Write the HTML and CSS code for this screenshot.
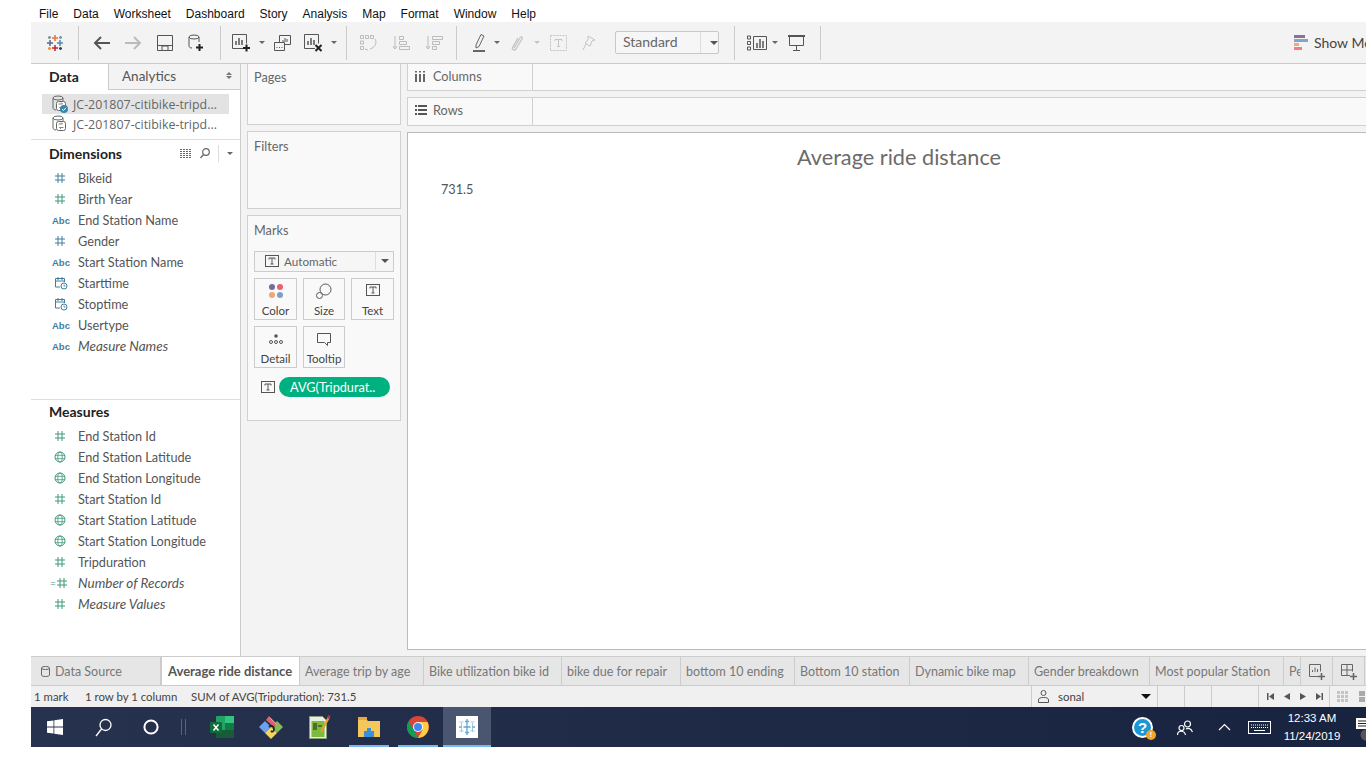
FILE: index.html
```html
<!DOCTYPE html>
<html lang="en">
<head>
    <meta charset="UTF-8">
    <title>Tableau - Average ride distance</title>
    <link rel="stylesheet" href="styles.css">
</head>

<body>
    <svg class="sprites" width="0" height="0">
        <symbol id="hash" viewBox="0 0 12 12"><path d="M4 1v10M8 1v10M1 4h10M1 8h10" fill="none" stroke="currentColor"/></symbol>
        <symbol id="cal" viewBox="0 0 14 14"><path d="M1.500 11V2.500h9V6M1.500 5h9M4 1v3M8 1v3M1.500 11H6" fill="none" stroke="currentColor"/><circle cx="10" cy="10" r="3" fill="none" stroke="currentColor"/><path d="M10 8.500V10h1.500" fill="none" stroke="currentColor" stroke-width=".8"/></symbol>
        <symbol id="globe" viewBox="0 0 12 12"><circle cx="6" cy="6" r="5" fill="none" stroke="currentColor"/><ellipse cx="6" cy="6" rx="2.200" ry="5" fill="none" stroke="currentColor" stroke-width=".8"/><path d="M1 4.300h10M1 7.700h10" fill="none" stroke="currentColor" stroke-width=".8"/></symbol>
        <symbol id="tbox" viewBox="0 0 14 14"><rect x=".5" y="1.500" width="13" height="11" fill="none" stroke="currentColor"/><path d="M4 5.500V4h6v1.500M7 4v6M5.500 10h3" fill="none" stroke="currentColor"/></symbol>
        <symbol id="datasrc" viewBox="0 0 16 18"><ellipse cx="7" cy="3" rx="5" ry="2" fill="none" stroke="currentColor"/><path d="M2 3v10c0 1 1.500 2 3 2M12 3v3" fill="none" stroke="currentColor"/><rect x="5.500" y="6.500" width="9" height="9" rx="2" fill="#fff" stroke="currentColor"/><path d="M7.500 9h4l-1.500-1.500M12.500 12.500h-4l1.500 1.500" fill="none" stroke="currentColor" stroke-width=".8"/></symbol>
    </svg>

    <div class="app">
        <nav class="menu">
            <span>File</span><span>Data</span><span>Worksheet</span><span>Dashboard</span><span>Story</span><span>Analysis</span><span>Map</span><span>Format</span><span>Window</span><span>Help</span>
        </nav>

        <div class="toolbar">
            <div class="tool-group logo-group">
                <svg width="18" height="18" viewBox="0 0 18 18" fill="none" stroke-width="1.500">
                    <path d="M9 1v6M6 4h6" stroke="#e8762d"/>
                    <path d="M9 11v6M6 14h6" stroke="#c72035"/>
                    <path d="M4 6v6M1 9h6" stroke="#5b6591"/>
                    <path d="M14 6v6M11 9h6" stroke="#59879b"/>
                    <path d="M3.500 2v3M2 3.500h3M14.500 2v3M13 3.500h3" stroke="#7099a6"/>
                    <path d="M3.500 13v3M2 14.500h3" stroke="#eb912b"/>
                    <path d="M14.500 13v3M13 14.500h3" stroke="#1f457e"/>
                </svg>
            </div>
            <div class="tool-group history-group">
                <svg width="17" height="16" viewBox="0 0 17 16" fill="none" stroke="#555" stroke-width="2"><path d="M17 8H2M8 2L2 8l6 6"/></svg>
                <svg width="17" height="16" viewBox="0 0 17 16" fill="none" stroke="#bbb" stroke-width="2"><path d="M0 8h15M9 2l6 6-6 6"/></svg>
                <svg width="16" height="16" viewBox="0 0 16 16" fill="none" stroke="#555"><path d="M.5.500h15v15H.5zM.5 10.500h15M5 15v-4h6v4"/></svg>
                <svg width="16" height="18" viewBox="0 0 16 18" fill="none" stroke="#555"><ellipse cx="6" cy="3" rx="5" ry="2"/><path d="M1 3v9c0 1 1 2 3 2M11 3v5"/><path d="M8 13.500h7M11.500 10v7" stroke="#222" stroke-width="2"/></svg>
            </div>
            <div class="tool-group sheet-group">
                <svg width="19" height="18" viewBox="0 0 19 18" fill="none" stroke="#555"><path d="M12 14.500H.5V.5h14v9"/><path d="M4 11V7M7 11V4M10 11V6" stroke-width="1.500"/><path d="M11 14h7M14.500 10.500v7" stroke="#222" stroke-width="2"/></svg>
                <i class="caret"></i>
                <svg class="dup" width="17" height="16" viewBox="0 0 17 16" fill="none" stroke="#555"><path d="M5.500 7V.5h11v9H11"/><path d="M9 7V5M11 7V3M13 7V4"/><path d="M.5 7.500h10v8H.5zM3 13v-1M5.500 13v-1M8 13v-1"/></svg>
                <svg class="clear" width="19" height="18" viewBox="0 0 19 18" fill="none" stroke="#555"><path d="M11 14.500H.5V.5h14v9"/><path d="M4 11V7M7 11V4M10 11V6" stroke-width="1.500"/><path d="M11.500 11l6 6M17.500 11l-6 6" stroke="#222" stroke-width="2"/></svg>
                <i class="caret"></i>
            </div>
            <div class="tool-group sort-group">
                <svg width="17" height="18" viewBox="0 0 17 18" fill="none" stroke="#bbb"><path d="M.5 1.500h3v3h-3zM5.500 1.500h3v3h-3zM10.500 1.500h3v3h-3zM.5 7h3v3h-3zM.5 12.500h3v3h-3zM15 5c2 3 1 8-5 10M5 15l3 1"/></svg>
                <svg width="18" height="16" viewBox="0 0 18 16" fill="none" stroke="#bbb"><path d="M3 1v13M1 11l2 3 2-3"/><path d="M7.500 1.500h4v3h-4zM7.500 6.500h7v3h-7zM7.500 11.500h10v3h-10z"/></svg>
                <svg width="18" height="16" viewBox="0 0 18 16" fill="none" stroke="#bbb"><path d="M3 1v13M1 11l2 3 2-3"/><path d="M7.500 1.500h10v3h-10zM7.500 6.500h7v3h-7zM7.500 11.500h4v3h-4z"/></svg>
            </div>
            <div class="tool-group mark-group">
                <svg width="13" height="19" viewBox="0 0 13 19" fill="none" stroke="#666"><path d="M3 12L8 1.500l3 1.500-5 10.500-3 1.500z"/><path d="M0 18h12" stroke-width="2"/></svg>
                <i class="caret"></i>
                <svg class="clip" width="13" height="16" viewBox="0 0 13 16" fill="none" stroke="#c4c4c4" stroke-width="1.300"><path d="M4 13L10 3c1-2 3-1 2 1L6 14c-1.500 2-4.500.5-3.500-1.500L8 3"/></svg>
                <i class="caret off"></i>
                <svg class="label-box" width="17" height="16" viewBox="0 0 17 16" fill="none" stroke="#c4c4c4"><path d="M.5.500h16v15H.5z" stroke-dasharray="2 1"/><path d="M5 6V4.500h7V6M8.500 4.500v7M7 11.500h3"/></svg>
                <svg class="pin" width="14" height="16" viewBox="0 0 14 16" fill="none" stroke="#c4c4c4"><path d="M6 1l7 4-3 1-2 5-2-1-3-2 3-3zM4 9l-3 6"/></svg>
                <div class="fit-select"><span>Standard</span><b><i class="caret dark"></i></b></div>
            </div>
            <div class="tool-group show-group">
                <svg width="20" height="16" viewBox="0 0 20 16" fill="none" stroke="#555"><path d="M.5 1h3v3h-3zM.5 6.500h3v3h-3zM.5 12h3v3h-3zM6.500 1.500h13v13h-13z"/><path d="M10 13V8M13 13V4M16 13V6" stroke-width="1.500"/></svg>
                <i class="caret"></i>
                <svg class="present" width="17" height="16" viewBox="0 0 17 16" fill="none" stroke="#555"><path d="M0 1h17" stroke-width="2"/><path d="M1.500 1v9.500h14V1M8.500 10.500V15M5 15.500h7"/></svg>
            </div>
            <div class="show-me">
                <svg width="14" height="15" viewBox="0 0 14 15"><rect width="11" height="3" fill="#8a7196"/><rect y="4" width="14" height="3" fill="#86a4c9"/><rect y="8" width="5" height="3" fill="#f3a878"/><rect y="12" width="8" height="3" fill="#f57c87"/></svg>
                <span>Show Me</span>
            </div>
        </div>

        <div class="workspace">
            <aside class="data-panel">
                <div class="panel-tabs">
                    <div class="panel-tab active">Data</div>
                    <div class="panel-tab">Analytics<span class="updown"></span></div>
                </div>
                <div class="sources">
                    <div class="source selected">
                        <span class="src-icon"><svg width="16" height="18"><use href="#datasrc"/></svg><svg class="check" width="8" height="8" viewBox="0 0 8 8"><circle cx="4" cy="4" r="4" fill="#3b87ac"/><path d="M2 4l1.500 1.500L6 2.800" fill="none" stroke="#fff"/></svg></span>
                        JC-201807-citibike-tripd...
                    </div>
                    <div class="source">
                        <span class="src-icon"><svg width="16" height="18"><use href="#datasrc"/></svg></span>
                        JC-201807-citibike-tripd...
                    </div>
                </div>

                <section class="fields dims">
                    <header class="fields-head">
                        <h3>Dimensions</h3>
                        <svg class="grid-ico" width="12" height="9" viewBox="0 0 12 9" fill="none" stroke="#666" stroke-dasharray="2 1"><path d="M0 .5h12M0 2.500h12M0 4.500h12M0 6.500h12M0 8.500h12"/></svg>
                        <svg class="search-ico" width="10" height="11" viewBox="0 0 10 11" fill="none" stroke="#666" stroke-width="1.200"><circle cx="6" cy="4" r="3.300"/><path d="M3.500 6.500L.5 10"/></svg>
                        <i class="head-sep"></i>
                        <i class="caret"></i>
                    </header>
                    <ul>
                        <li><span class="ftype dim"><svg width="12" height="12"><use href="#hash"/></svg></span>Bikeid</li>
                        <li><span class="ftype mea"><svg width="12" height="12"><use href="#hash"/></svg></span>Birth Year</li>
                        <li><span class="ftype dim abc">Abc</span>End Station Name</li>
                        <li><span class="ftype dim"><svg width="12" height="12"><use href="#hash"/></svg></span>Gender</li>
                        <li><span class="ftype dim abc">Abc</span>Start Station Name</li>
                        <li><span class="ftype dim"><svg width="14" height="14"><use href="#cal"/></svg></span>Starttime</li>
                        <li><span class="ftype dim"><svg width="14" height="14"><use href="#cal"/></svg></span>Stoptime</li>
                        <li><span class="ftype dim abc">Abc</span>Usertype</li>
                        <li class="calc"><span class="ftype dim abc">Abc</span>Measure Names</li>
                    </ul>
                </section>

                <section class="fields meas">
                    <header class="fields-head">
                        <h3>Measures</h3>
                    </header>
                    <ul>
                        <li><span class="ftype mea"><svg width="12" height="12"><use href="#hash"/></svg></span>End Station Id</li>
                        <li><span class="ftype mea"><svg width="12" height="12"><use href="#globe"/></svg></span>End Station Latitude</li>
                        <li><span class="ftype mea"><svg width="12" height="12"><use href="#globe"/></svg></span>End Station Longitude</li>
                        <li><span class="ftype mea"><svg width="12" height="12"><use href="#hash"/></svg></span>Start Station Id</li>
                        <li><span class="ftype mea"><svg width="12" height="12"><use href="#globe"/></svg></span>Start Station Latitude</li>
                        <li><span class="ftype mea"><svg width="12" height="12"><use href="#globe"/></svg></span>Start Station Longitude</li>
                        <li><span class="ftype mea"><svg width="12" height="12"><use href="#hash"/></svg></span>Tripduration</li>
                        <li class="calc"><span class="ftype mea eq">=<svg width="12" height="12"><use href="#hash"/></svg></span>Number of Records</li>
                        <li class="calc"><span class="ftype mea"><svg width="12" height="12"><use href="#hash"/></svg></span>Measure Values</li>
                    </ul>
                </section>
            </aside>

            <div class="cards">
                <div class="card pages">Pages</div>
                <div class="card filters">Filters</div>
                <div class="card marks">
                    <div>Marks</div>
                    <div class="mark-type">
                        <svg width="14" height="14" class="mt-ico"><use href="#tbox"/></svg>
                        <span>Automatic</span>
                        <b><i class="caret dark"></i></b>
                    </div>
                    <div class="mark-btns">
                        <div class="mark-btn">
                            <svg width="16" height="16" viewBox="0 0 16 16"><circle cx="4" cy="4" r="3" fill="#7a6a96"/><circle cx="12" cy="4" r="3" fill="#e8616e"/><circle cx="4" cy="12" r="3" fill="#f2a575"/><circle cx="12" cy="12" r="3" fill="#7f9fc6"/></svg>
                            Color
                        </div>
                        <div class="mark-btn">
                            <svg width="16" height="16" viewBox="0 0 16 16" fill="none" stroke="#555"><circle cx="9.500" cy="6.500" r="5.500"/><circle cx="3.500" cy="12.500" r="3" fill="#f9f9f9"/></svg>
                            Size
                        </div>
                        <div class="mark-btn">
                            <svg width="14" height="14"><use href="#tbox"/></svg>
                            Text
                        </div>
                        <div class="mark-btn">
                            <svg width="16" height="16" viewBox="0 0 16 16" fill="none" stroke="#555"><circle cx="8" cy="5" r="1.800" fill="#555" stroke="none"/><circle cx="3" cy="11" r="1.500"/><circle cx="8" cy="11" r="1.500"/><circle cx="13" cy="11" r="1.500"/></svg>
                            Detail
                        </div>
                        <div class="mark-btn">
                            <svg width="16" height="16" viewBox="0 0 16 16" fill="none" stroke="#555"><path d="M1.500 2.500h13v9h-3v3l-3-3h-7z"/></svg>
                            Tooltip
                        </div>
                    </div>
                    <div class="pill-row">
                        <svg width="14" height="14"><use href="#tbox"/></svg>
                        <span class="pill">AVG(Tripdurat..</span>
                    </div>
                </div>
            </div>

            <div class="view-col">
                <div class="shelf">
                    <div class="shelf-label"><svg width="18" height="11" viewBox="0 0 18 11" fill="#666"><path d="M0 3h2v8H0zM4 3h2v8H4zM8 3h2v8H8zM0 0h2v1.500H0zM4 0h2v1.500H4zM8 0h2v1.500H8z"/></svg>Columns</div>
                </div>
                <div class="shelf">
                    <div class="shelf-label"><svg width="18" height="10" viewBox="0 0 18 10" fill="#555"><path d="M0 0h2v2H0zM3 0h9v2H3zM0 4h2v2H0zM3 4h9v2H3zM0 8h2v2H0zM3 8h9v2H3z"/></svg>Rows</div>
                </div>
                <main class="view">
                    <h1>Average ride distance</h1>
                    <p>731.5</p>
                </main>
            </div>
        </div>

        <div class="tabs">
            <div class="tab source-tab"><svg width="9" height="11" viewBox="0 0 9 11" fill="none" stroke="#666"><path d="M.5 2v7c0 2 8 2 8 0V2c0-2-8-2-8 0zM.5 2c0 2 8 2 8 0"/></svg>Data Source</div>
            <div class="tab current">Average ride distance</div>
            <div class="tab">Average trip by age</div>
            <div class="tab">Bike utilization bike id</div>
            <div class="tab">bike due for repair</div>
            <div class="tab">bottom 10 ending</div>
            <div class="tab">Bottom 10 station</div>
            <div class="tab">Dynamic bike map</div>
            <div class="tab">Gender breakdown</div>
            <div class="tab">Most popular Station</div>
            <div class="tab clipped">Pe</div>
            <div class="tab icon-tab"><svg width="16" height="16" viewBox="0 0 16 16" fill="none" stroke="#666"><path d="M9 12.500H.5V.5h11v7"/><path d="M3.500 8V6M6 8V3.500M8.500 8V5"/><path d="M9 12.500h7M12.500 9v7" stroke-width="1.600"/></svg></div>
            <div class="tab icon-tab"><svg width="16" height="16" viewBox="0 0 16 16" fill="none" stroke="#666"><path d="M9 11.500H.5V.5h11v7M.5 6h11M6 .5v11"/><path d="M9 12.500h7M12.500 9v7" stroke-width="1.600"/></svg></div>
        </div>

        <div class="status">
            <span class="st-mark">1 mark</span>
            <span class="st-size">1 row by 1 column</span>
            <span class="st-sum">SUM of AVG(Tripduration): 731.5</span>
            <div class="st-user">
                <svg width="11" height="13" viewBox="0 0 11 13" fill="none" stroke="#555"><circle cx="5.500" cy="3" r="2.500"/><path d="M.5 12.500V10c0-2 2-2.500 5-2.500s5 .5 5 2.500v2.500z"/></svg>
                <span>sonal</span>
                <i class="caret black"></i>
            </div>
            <i class="st-cell"></i>
            <i class="st-cell"></i>
            <i class="st-gap"></i>
            <div class="st-nav">
                <svg width="7" height="7" viewBox="0 0 7 7" fill="#555"><path d="M0 0h1.500v7H0zM7 0v7L2 3.500z"/></svg>
                <svg width="6" height="7" viewBox="0 0 6 7" fill="#555"><path d="M6 0v7L0 3.500z"/></svg>
                <svg width="6" height="7" viewBox="0 0 6 7" fill="#555"><path d="M0 0v7l6-3.500z"/></svg>
                <svg width="7" height="7" viewBox="0 0 7 7" fill="#555"><path d="M7 0H5.500v7H7zM0 0v7l5-3.500z"/></svg>
            </div>
            <div class="st-views">
                <svg width="11" height="11" viewBox="0 0 11 11" fill="#c4c4c4"><path d="M0 0h3v3H0zM4 0h3v3H4zM8 0h3v3H8zM0 4h3v3H0zM4 4h3v3H4zM8 4h3v3H8zM0 8h3v3H0zM4 8h3v3H4zM8 8h3v3H8z"/></svg>
                <svg width="6" height="11" viewBox="0 0 6 11" fill="#aaa"><path d="M0 0h6v5H0zM0 6h6v5H0z"/></svg>
            </div>
        </div>

        <footer class="taskbar">
            <div class="task-icon"><svg width="16" height="16" viewBox="0 0 16 16" fill="#fff"><path d="M0 2.300L6.500 1.400v6.200H0zM7.300 1.300L16 0v7.600H7.300zM0 8.400h6.500v6.200L0 13.700zM7.300 8.400H16V16l-8.700-1.300z"/></svg></div>
            <div class="task-icon"><svg width="17" height="19" viewBox="0 0 17 19" fill="none" stroke="#fff" stroke-width="1.300"><circle cx="10.500" cy="7" r="5.500"/><path d="M6.500 11L1 18"/></svg></div>
            <div class="task-icon"><svg width="16" height="16" viewBox="0 0 16 16" fill="none" stroke="#fff" stroke-width="2"><circle cx="8" cy="8" r="6.600"/></svg></div>
            <div class="task-sep"></div>
            <div class="task-apps">
                <div class="task-icon"><svg width="24" height="22" viewBox="0 0 24 22"><rect x="6" width="18" height="22" rx="1" fill="#21a366"/><rect x="15" width="9" height="7" fill="#33c481"/><rect x="15" y="7" width="9" height="7" fill="#107c41"/><rect x="6" y="14" width="18" height="8" fill="#185c37"/><rect y="6" width="12" height="11" rx="1" fill="#0f6d3b"/><path d="M3.500 8.500l5 6M8.500 8.500l-5 6" stroke="#fff" stroke-width="1.500"/></svg></div>
                <div class="task-icon"><svg width="24" height="24" viewBox="0 0 24 24"><path d="M0 12l6-6 6 6-6 6z" fill="#6aa2f2"/><path d="M12 12l6-6 6 6-6 6z" fill="#7fbe54"/><path d="M6 18l6-6 6 6-6 6z" fill="#f4d55f"/><path d="M7 5l3-4 8 8-3 3z" fill="#e85d68"/><path d="M11 3l7 7" stroke="#e9a0a6"/><path d="M10 12c2-2 5-1 5 2s-2 3-3 2" fill="none" stroke="#222" stroke-width="1.800"/></svg></div>
                <div class="task-icon"><svg width="22" height="24" viewBox="0 0 22 24"><path d="M.5 1.500h13l4 4v18H.5z" fill="#e8efe0" stroke="#8c9c84"/><rect x="2.500" y="6" width="13" height="16" fill="#7dbb3a"/><path d="M5 8v7M7 8v7M9 11h4" stroke="#222"/><path d="M12 17L20 2" stroke="#e0a030" stroke-width="2.400"/><path d="M19 3.500L20.500 .5" stroke="#b3373f" stroke-width="2.400"/></svg></div>
                <div class="task-icon open"><svg width="22" height="20" viewBox="0 0 22 20"><path d="M0 2h8l2 2h12v16H0z" fill="#f5c75a"/><rect width="9" height="3" fill="#e9a93a"/><path d="M6 20v-6h3v-3h4v3h3v6z" fill="#3a8fd9"/></svg></div>
                <div class="task-icon open"><svg width="22" height="22" viewBox="0 0 22 22"><circle cx="11" cy="11" r="11" fill="#db4437"/><path d="M11 22A11 11 0 0 1 1.500 5.500L7 14z" fill="#0f9d58"/><path d="M11 6h9.500A11 11 0 0 1 11 22l4.500-8z" fill="#ffcd40"/><circle cx="11" cy="11" r="5" fill="#fff"/><circle cx="11" cy="11" r="4" fill="#4285f4"/></svg></div>
                <div class="task-icon active"><svg width="22" height="22" viewBox="0 0 22 22" fill="none"><rect width="22" height="22" fill="#fff"/><path d="M11 3v16M7.500 11h7M3 11h3M16 11h3M9 5.500h4M9 16.500h4" stroke="#5fa8d3" stroke-width="1.300"/><path d="M5.500 7v4M5.500 12v4M16.500 7v3M16.500 12v4M3.500 6h4M14.500 6h4M3.500 15h4M14.500 15h4" stroke="#9cc9e3"/></svg></div>
            </div>
            <div class="tray">
                <div class="help-ico">?<i>!</i></div>
                <svg class="people" width="16" height="15" viewBox="0 0 16 15" fill="none" stroke="#fff" stroke-width="1.200"><circle cx="10.500" cy="4" r="3"/><circle cx="4.500" cy="8" r="2.500"/><path d="M.5 15c0-5 7-5 8 0M9 9c2-1 5-1 6.500 3"/></svg>
                <svg class="chev" width="13" height="8" viewBox="0 0 13 8" fill="none" stroke="#fff" stroke-width="1.200"><path d="M1 7l5.500-5.500L12 7"/></svg>
                <svg class="kbd" width="23" height="13" viewBox="0 0 23 13" fill="none" stroke="#fff"><rect x=".5" y=".5" width="22" height="12"/><path d="M3 4h17M3 6.500h17" stroke-dasharray="1 1"/><path d="M6 9.500h11"/></svg>
                <div class="clock"><span>12:33 AM</span><span>11/24/2019</span></div>
                <svg class="note" width="10" height="23" viewBox="0 0 10 23"><circle cx="10" cy="17" r="5.500" fill="#555"/><path d="M0 0h10v11H0z" fill="#fff"/><path d="M2 3h8M2 5.500h8M2 8h8" stroke="#222"/></svg>
            </div>
        </footer>
    </div>
</body>
</html>
```

FILE: styles.css
```css
* {
    margin: 0;
    padding: 0;
    box-sizing: border-box;
}

html, body {
    width: 1366px;
    height: 768px;
    overflow: hidden;
    background: #fff;
}

body {
    font-family: "Lato", "Open Sans", sans-serif;
    font-size: 12.7px;
    color: #555;
}

.sprites {
    display: block;
    height: 0;
}

.app {
    margin-left: 31px;
    height: 747px;
    display: flex;
    flex-direction: column;
    overflow: hidden;
}

.caret {
    display: inline-block;
    width: 0;
    height: 0;
    border-left: 3px solid transparent;
    border-right: 3px solid transparent;
    border-top: 3px solid #666;
}

.caret.off {
    border-top-color: #c4c4c4;
}

.caret.dark {
    border-left-width: 4px;
    border-right-width: 4px;
    border-top: 4px solid #555;
}

.caret.black {
    border-left-width: 5px;
    border-right-width: 5px;
    border-top: 5px solid #111;
}

/* menu */
.menu {
    height: 22px;
    flex: none;
    padding: 5px 0 0 8px;
    display: flex;
    align-items: center;
    gap: 15px;
    font-family: "Liberation Sans", sans-serif;
    font-size: 12px;
    color: #111;
    background: #fff;
}

/* toolbar */
.toolbar {
    height: 42px;
    flex: none;
    display: flex;
    align-items: stretch;
    padding: 4px 0 3px;
    background: #f3f3f3;
    border-bottom: 1px solid #ccc;
}

.tool-group {
    display: flex;
    align-items: center;
    flex: none;
    padding-bottom: 1px;
    border-right: 1px solid #ccc;
}

.logo-group {
    width: 48px;
    padding-left: 15px;
}

.history-group {
    width: 142px;
    padding-left: 14px;
    gap: 15px;
}

.sheet-group {
    width: 126px;
    padding-left: 11px;
}

.sheet-group .caret {
    margin-left: 8px;
}

.sheet-group .dup {
    margin-left: 9px;
}

.sheet-group .clear {
    margin-left: 13px;
}

.sort-group {
    width: 110px;
    padding-left: 13px;
    gap: 15px;
}

.mark-group {
    width: 278px;
    padding-left: 16px;
}

.mark-group .caret {
    margin-left: 8px;
}

.mark-group .clip {
    margin-left: 10px;
}

.mark-group .caret.off {
    margin-left: 11px;
}

.mark-group .label-box {
    margin-left: 10px;
}

.mark-group .pin {
    margin-left: 15px;
}

.fit-select {
    width: 104px;
    height: 23px;
    margin-left: 19px;
    display: flex;
    align-items: center;
    background: #f6f6f6;
    border: 1px solid #c8c8c8;
    border-radius: 2px;
    font-size: 14px;
    color: #666;
}

.fit-select span {
    flex: 1;
    padding: 0 0 2px 7px;
}

.fit-select b {
    width: 18px;
    height: 100%;
    display: flex;
    align-items: center;
    justify-content: center;
    border-left: 1px solid #ddd;
}

.show-group {
    width: 86px;
    padding-left: 12px;
}

.show-group .caret {
    margin-left: 5px;
}

.show-group .present {
    margin-left: 10px;
}

.show-me {
    margin-left: auto;
    width: 72px;
    flex: none;
    display: flex;
    align-items: center;
    gap: 6px;
    padding-bottom: 2px;
    font-size: 14px;
    color: #444;
    white-space: nowrap;
    overflow: hidden;
}

.show-me svg {
    flex: none;
}

/* main area */
.workspace {
    flex: 1;
    min-height: 0;
    display: flex;
    background: #f3f3f3;
}

/* data pane */
.data-panel {
    width: 210px;
    flex: none;
    background: #fff;
    border-right: 1px solid #ccc;
}

.panel-tabs {
    display: flex;
    height: 26px;
}

.panel-tab {
    display: flex;
    align-items: center;
    padding-bottom: 1px;
    font-size: 13.5px;
    color: #555;
}

.panel-tab.active {
    width: 77px;
    padding-left: 18px;
    font-size: 14px;
    font-weight: 700;
    color: #222;
}

.panel-tab:not(.active) {
    flex: 1;
    padding-left: 13px;
    background: #f3f3f3;
    border-left: 1px solid #ccc;
    border-bottom: 1px solid #ccc;
    position: relative;
}

.updown {
    position: absolute;
    right: 8px;
    top: 8px;
    width: 0;
    height: 0;
    border-left: 3px solid transparent;
    border-right: 3px solid transparent;
    border-bottom: 3px solid #777;
}

.updown::after {
    content: "";
    position: absolute;
    left: -3px;
    top: 4px;
    border-left: 3px solid transparent;
    border-right: 3px solid transparent;
    border-top: 3px solid #777;
}

.sources {
    padding: 4px 11px 0;
    height: 50px;
    border-bottom: 1px solid #ddd;
}

.source {
    height: 20px;
    display: flex;
    align-items: center;
    font-family: "Open Sans", sans-serif;
    font-size: 12.4px;
    color: #666;
    white-space: nowrap;
}

.source.selected {
    background: #e3e3e3;
}

.src-icon {
    position: relative;
    width: 31px;
    flex: none;
    padding-left: 9px;
    display: flex;
    color: #666;
}

.check {
    position: absolute;
    left: 18px;
    top: 10px;
}

.fields-head {
    height: 27px;
    display: flex;
    align-items: center;
    padding-left: 18px;
}

.fields-head h3 {
    font-size: 14px;
    font-weight: 700;
    color: #222;
    flex: 1;
}

.grid-ico {
    margin-right: 8px;
}

.search-ico {
    margin-right: 8px;
}

.head-sep {
    width: 1px;
    height: 17px;
    background: #ddd;
    margin-right: 8px;
}

.fields-head .caret {
    margin-right: 7px;
}

.fields ul {
    list-style: none;
}

.fields li {
    height: 21px;
    display: flex;
    align-items: center;
    color: #555;
    white-space: nowrap;
}

.fields li.calc {
    font-size: 13.5px;
    font-style: italic;
}

.ftype {
    width: 47px;
    flex: none;
    padding-left: 23px;
    display: flex;
    align-items: center;
    font-style: normal;
}

.ftype.dim {
    color: #3f7f9e;
}

.ftype.mea {
    color: #3d9a77;
}

.ftype.abc {
    padding: 2px 0 0 21px;
    font-size: 9.5px;
    font-weight: 700;
    font-family: "Liberation Sans", sans-serif;
}

.ftype.eq {
    padding-left: 19px;
    font-size: 10px;
}

.dims {
    height: 260px;
    border-bottom: 1px solid #ddd;
}

.meas .fields-head {
    height: 24px;
    padding-bottom: 2px;
}

.meas ul {
    margin-top: 1px;
}

/* shelves and cards */
.cards {
    width: 154px;
    flex: none;
    margin-left: 6px;
}

.card {
    background: #f9f9f9;
    border: 1px solid #d0d0d0;
    padding: 5px 6px;
    color: #666;
    margin-bottom: 6px;
}

.pages {
    height: 61px;
    border-top: none;
}

.filters {
    height: 78px;
    padding-top: 6px;
}

.marks {
    height: 206px;
    padding-top: 6px;
}

.mark-type {
    height: 21px;
    margin-top: 13px;
    display: flex;
    align-items: center;
    padding-bottom: 1px;
    border: 1px solid #ccc;
    background: #f6f6f6;
    font-size: 11.7px;
}

.mt-ico {
    margin: 0 5px 0 10px;
    color: #555;
}

.mark-type span {
    flex: 1;
}

.mark-type b {
    width: 18px;
    height: 100%;
    display: flex;
    align-items: center;
    justify-content: center;
    border-left: 1px solid #ddd;
}

.mark-btns {
    display: grid;
    grid-template-columns: 43px 42px 43px;
    gap: 6px;
    margin-top: 6px;
}

.mark-btn {
    height: 42px;
    padding: 4px 0 2px;
    display: flex;
    flex-direction: column;
    align-items: center;
    justify-content: space-between;
    border: 1px solid #ccc;
    font-size: 11.5px;
    color: #444;
}

.mark-btn svg {
    color: #555;
}

.pill-row {
    margin-top: 9px;
    display: flex;
    align-items: center;
    color: #555;
}

.pill-row svg {
    margin-left: 7px;
}

.pill {
    margin-left: 4px;
    width: 111px;
    height: 20px;
    border-radius: 10px;
    background: #00b180;
    color: #fff;
    line-height: 20px;
    padding-left: 11px;
    white-space: nowrap;
    overflow: hidden;
}

.view-col {
    flex: 1;
    min-width: 0;
    margin-left: 6px;
}

.shelf {
    height: 27px;
    margin-bottom: 6px;
    background: #f9f9f9;
    border-bottom: 1px solid #d0d0d0;
    border-left: 1px solid #d0d0d0;
}

.shelf + .shelf {
    height: 29px;
    border-top: 1px solid #d0d0d0;
    margin-bottom: 6px;
}

.shelf-label {
    width: 125px;
    height: 100%;
    display: flex;
    align-items: center;
    padding: 0 0 2px 7px;
    border-right: 1px solid #d0d0d0;
    color: #666;
}

.shelf + .shelf .shelf-label {
    padding-bottom: 3px;
}

.view {
    height: 518px;
    background: #fff;
    border: 1px solid #bbb;
    border-right: none;
}

.view h1 {
    width: 982px;
    text-align: center;
    margin-top: 11px;
    font-size: 21.7px;
    font-weight: 400;
    color: #6b6b6b;
}

.view p {
    margin: 11px 0 0 33px;
    color: #555;
}

/* sheet tabs */
.tabs {
    height: 30px;
    flex: none;
    display: grid;
    grid-template-columns: 130px 139px 124px 138px 119px 114px 115px 119px 121px 134px 17px 32px 32px;
    background: #e6e6e6;
    border-top: 1px solid #ccc;
    border-bottom: 1px solid #ccc;
}

.tab {
    display: flex;
    align-items: center;
    padding: 1px 0 0 5px;
    border-right: 1px solid #ccc;
    font-size: 12.5px;
    color: #777;
    white-space: nowrap;
    overflow: hidden;
}

.source-tab {
    padding-left: 10px;
    gap: 5px;
}

.tab.current {
    background: #fff;
    padding: 0 0 0 6px;
    font-size: 13px;
    font-weight: 700;
    color: #555;
    border-left: 1px solid #ccc;
}

.icon-tab {
    justify-content: center;
    padding-left: 0;
}

/* status bar */
.status {
    height: 21px;
    flex: none;
    display: flex;
    align-items: center;
    background: #f0f0f0;
    font-size: 11.4px;
    color: #444;
    white-space: nowrap;
}

.st-mark {
    width: 54px;
    padding-left: 3px;
}

.st-size {
    width: 106px;
}

.st-sum {
    width: 840px;
}

.st-user {
    width: 127px;
    height: 100%;
    display: flex;
    align-items: center;
    padding-left: 6px;
    border-left: 1px solid #ccc;
    border-right: 1px solid #ccc;
}

.st-user span {
    flex: 1;
    padding-left: 9px;
}

.st-user .caret {
    margin-right: 6px;
}

.st-cell {
    width: 27px;
    height: 100%;
    border-right: 1px solid #ccc;
}

.st-gap {
    width: 47px;
    height: 100%;
    border-right: 1px solid #ccc;
}

.st-nav {
    width: 71px;
    height: 100%;
    display: flex;
    align-items: center;
    gap: 10px;
    padding-left: 8px;
    border-right: 1px solid #ccc;
}

.st-views {
    display: flex;
    gap: 11px;
    padding-left: 7px;
    align-items: center;
}

/* windows taskbar */
.taskbar {
    height: 40px;
    flex: none;
    display: flex;
    align-items: center;
    background: linear-gradient(90deg, #27324e, #1f2a47 50%, #18233f);
}

.task-icon {
    width: 48px;
    height: 100%;
    display: flex;
    align-items: center;
    justify-content: center;
    flex: none;
    position: relative;
}

.task-sep {
    width: 5px;
    height: 16px;
    margin: 0 12px 0 6px;
    border-left: 1px solid #5a637c;
    border-right: 1px solid #5a637c;
}

.task-apps {
    display: flex;
    gap: 1px;
    height: 100%;
}

.task-icon.open::after,
.task-icon.active::after {
    content: "";
    position: absolute;
    left: 4px;
    right: 4px;
    bottom: 0;
    height: 2px;
    background: #76b9ed;
}

.task-icon.active {
    background: #4a5570;
}

.task-icon.active::after {
    left: 0;
    right: 0;
}

.tray {
    margin-left: auto;
    height: 100%;
    display: flex;
    align-items: center;
    color: #fff;
}

.help-ico {
    position: relative;
    width: 21px;
    height: 21px;
    border-radius: 50%;
    background: #1b97d6;
    border: 2px solid #fff;
    color: #fff;
    font-family: "Liberation Sans", sans-serif;
    font-weight: 700;
    font-size: 15px;
    line-height: 17px;
    text-align: center;
}

.help-ico i {
    position: absolute;
    right: -5px;
    bottom: -4px;
    width: 10px;
    height: 10px;
    border-radius: 50%;
    background: #f5a623;
    font-size: 7px;
    line-height: 10px;
    font-style: normal;
}

.people {
    margin-left: 24px;
}

.chev {
    margin-left: 25px;
}

.kbd {
    margin-left: 17px;
}

.clock {
    width: 70px;
    margin-left: 6px;
    display: flex;
    flex-direction: column;
    align-items: center;
    gap: 6px;
    font-family: "Liberation Sans", sans-serif;
    font-size: 11.5px;
    color: #fff;
}

.note {
    margin: 5px 0 0 9px;
}
```
